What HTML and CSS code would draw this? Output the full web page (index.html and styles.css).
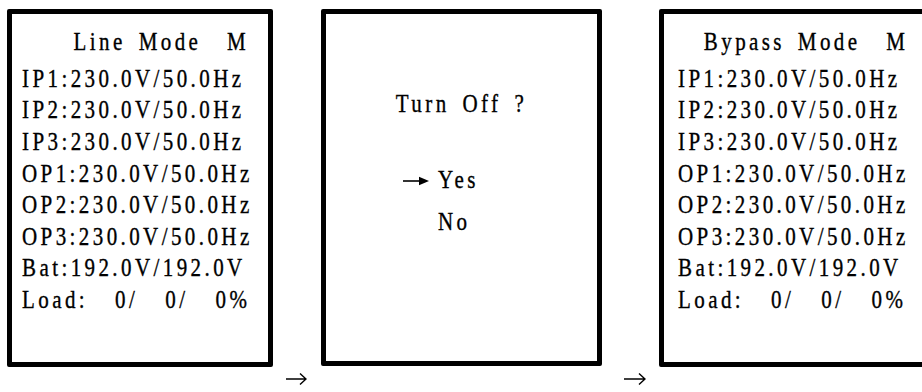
FILE: index.html
```html
<!DOCTYPE html>
<html lang="en">
<head>
<meta charset="utf-8">
<title>UPS LCD – Turn Off sequence</title>
<link rel="stylesheet" href="styles.css">
</head>
<body>
<main class="flow">
  <section class="screen screen-status">
    <p class="line title">    Line Mode  M</p>
    <p class="line">IP1:230.0V/50.0Hz</p>
    <p class="line">IP2:230.0V/50.0Hz</p>
    <p class="line">IP3:230.0V/50.0Hz</p>
    <p class="line">OP1:230.0V/50.0Hz</p>
    <p class="line">OP2:230.0V/50.0Hz</p>
    <p class="line">OP3:230.0V/50.0Hz</p>
    <p class="line">Bat:192.0V/192.0V</p>
    <p class="line line-load">Load:  0/  0/  0%</p>
  </section>

  <span class="step-arrow step-arrow-first" aria-hidden="true">
    <svg width="21" height="12" viewBox="0 0 21 12"><path d="M0 6H20M14 0.5L20 6L14 11.5" fill="none" stroke="#000" stroke-width="1.4"/></svg>
  </span>

  <section class="screen screen-confirm">
    <p class="line question">Turn Off ?</p>
    <ul class="options">
      <li class="option">
        <span class="marker"><svg width="26" height="10" viewBox="0 0 26 10"><path d="M0 5H18" stroke="#000" stroke-width="1.6"/><path d="M16 0.8L26 5L16 9.2Z" fill="#000"/></svg></span>
        <span class="line">Yes</span>
      </li>
      <li class="option">
        <span class="marker"></span>
        <span class="line">No</span>
      </li>
    </ul>
  </section>

  <span class="step-arrow step-arrow-second" aria-hidden="true">
    <svg width="22" height="12" viewBox="0 0 22 12"><path d="M0 6H21M15 0.5L21 6L15 11.5" fill="none" stroke="#000" stroke-width="1.4"/></svg>
  </span>

  <section class="screen screen-status screen-bypass">
    <p class="line title">  Bypass Mode  M</p>
    <p class="line">IP1:230.0V/50.0Hz</p>
    <p class="line">IP2:230.0V/50.0Hz</p>
    <p class="line">IP3:230.0V/50.0Hz</p>
    <p class="line">OP1:230.0V/50.0Hz</p>
    <p class="line">OP2:230.0V/50.0Hz</p>
    <p class="line">OP3:230.0V/50.0Hz</p>
    <p class="line">Bat:192.0V/192.0V</p>
    <p class="line line-load">Load:  0/  0/  0%</p>
  </section>
</main>
</body>
</html>
```
FILE: styles.css
```css
html, body {
  margin: 0;
  padding: 0;
  background: #fff;
}

body {
  width: 922px;
  height: 392px;
  overflow: hidden;
  color: #000;
}

.flow {
  display: flex;
  align-items: flex-start;
  padding: 9px 0 0 7px;
}

.screen {
  flex-shrink: 0;
  box-sizing: border-box;
  height: 358px;
  border: 5px solid #000;
  border-radius: 2px;
}

.screen-status {
  width: 266px;
  padding: 11.8px 0 0 10px;
}

.screen-bypass {
  width: 270px;
  padding-left: 14px;
}

.screen-confirm {
  width: 281px;
  height: 357px;
  padding-top: 73.8px;
}

/* LCD text: condensed Times-like half-width glyphs on a ~12.9px pitch */
.line {
  margin: 0;
  font-family: "Liberation Serif", "Times New Roman", serif;
  font-size: 25px;
  line-height: 31.6px;
  letter-spacing: 4.06px;
  word-spacing: 5.05px;
  white-space: pre;
  -webkit-text-stroke: 0.35px #000;
  transform: scaleX(0.84);
  transform-origin: left center;
}

.line-load {
  word-spacing: 5.8px;
}

.title {
  margin-bottom: 5.4px;
}

.question {
  text-align: center;
  margin-bottom: 44.4px;
  transform-origin: center center;
}

.options {
  list-style: none;
  margin: 0;
  padding: 0 0 0 77px;
  display: flex;
  flex-direction: column;
  gap: 11px;
}

.option {
  display: flex;
  align-items: center;
  gap: 9px;
}

.marker {
  display: flex;
  align-items: center;
  width: 26px;
  height: 10px;
  margin-top: 2px;
}

.step-arrow {
  flex-shrink: 0;
  display: flex;
  margin-top: 364px;
}

.step-arrow-first {
  margin-left: 13px;
  margin-right: 14px;
}

.step-arrow-second {
  margin-left: 22px;
  margin-right: 13px;
}
```
